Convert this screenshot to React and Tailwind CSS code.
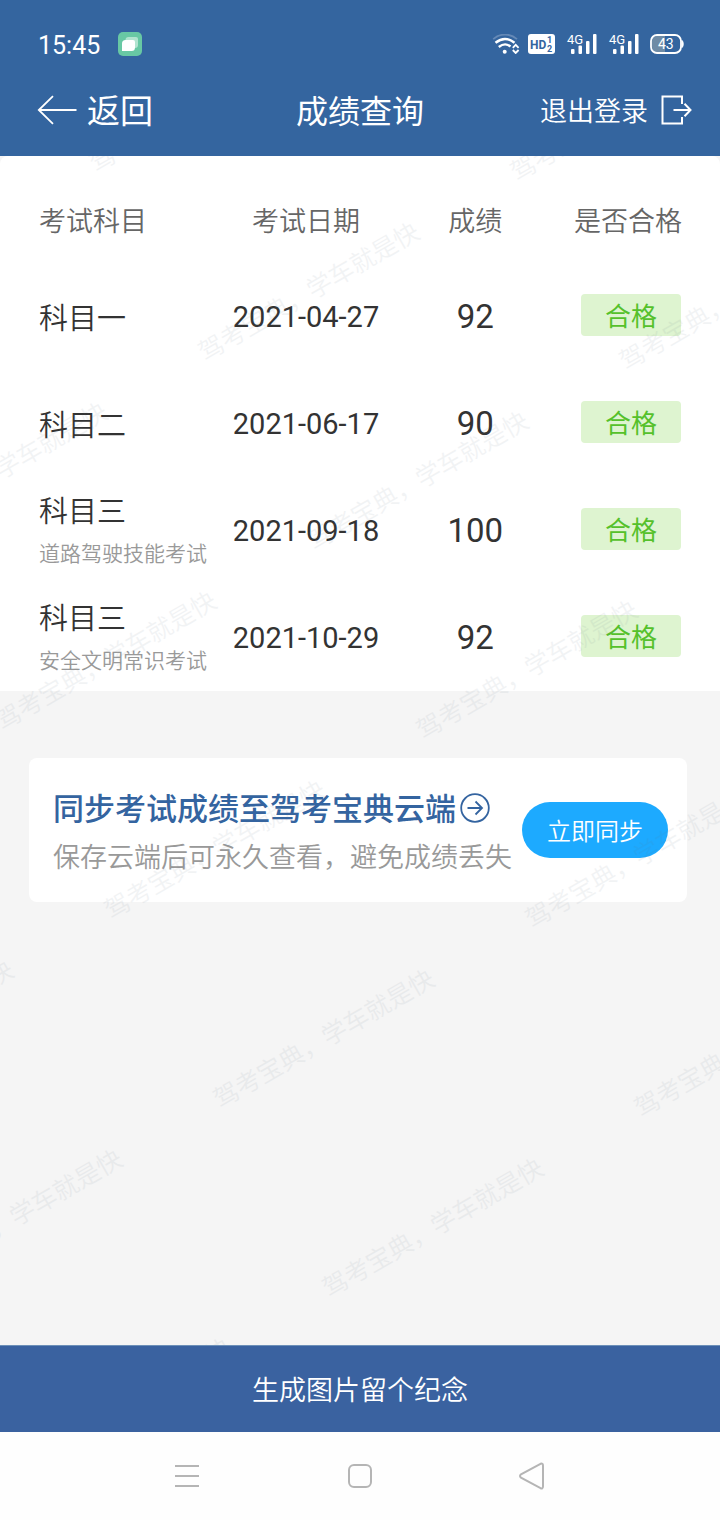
const CJK = "font-[Roboto,'Noto_Sans_CJK_SC',sans-serif]";

const records = [
  { id: 1, subject: '科目一', date: '2021-04-27', score: 92 },
  { id: 2, subject: '科目二', date: '2021-06-17', score: 90 },
  { id: 3, subject: '科目三', note: '道路驾驶技能考试', date: '2021-09-18', score: 100 },
  { id: 4, subject: '科目三', note: '安全文明常识考试', date: '2021-10-29', score: 92 },
];

// Staggered watermark grid: each row shifts right and down, columns repeat every 421px
const watermarks = [];
for (let row = 0; row < 8; row += 1) {
  for (let col = -3; col < 3; col += 1) {
    const x = 96 + row * 109 + col * 421;
    if (x > -215 && x < 715) {
      watermarks.push({ x, y: 17 + row * 189 + col * 9 });
    }
  }
}

function Watermark() {
  return (
    <div aria-hidden="true" className="pointer-events-none absolute inset-0 overflow-hidden">
      <svg className="h-full w-full fill-[#5f7285] text-[25px] font-[350] opacity-[0.08]">
        {watermarks.map(({ x, y }) => (
          <text key={`${x}-${y}`} transform={`translate(${x} ${y}) rotate(-30)`}>
            驾考宝典，学车就是快
          </text>
        ))}
      </svg>
    </div>
  );
}

function NoteIcon() {
  return (
    <svg className="h-6 w-6" viewBox="0 0 24 24">
      <rect width="24" height="24" rx="5" fill="#68c8a4" />
      <path d="M10.500 5H18a2 2 0 0 1 2 2v6a3 3 0 0 1-3 3H9.500a2 2 0 0 1-2-2V8a3 3 0 0 1 3-3Z" fill="#b2e4d0" />
      <path d="M7.500 8H15a2 2 0 0 1 2 2v5.500a3.500 3.500 0 0 1-3.500 3.500H4V11.500A3.500 3.500 0 0 1 7.500 8Z" fill="#fff" />
    </svg>
  );
}

function WifiIcon() {
  return (
    <svg className="h-5 w-7" viewBox="0 0 28 20" fill="none" stroke="#fff" strokeWidth="2.400">
      <path d="M1.200 5.200C8-1 18-1 25 5.200" stroke="#6589b6" strokeWidth="1.800" />
      <path d="M3.500 8.800C9.500 3.900 16.500 3.900 22.500 8.800" />
      <path d="M6.800 13C10.800 9.800 15.200 9.800 18.500 12.500" />
      <circle cx="12.700" cy="17.800" r="2" fill="#fff" stroke="none" />
      <path d="M20.800 13.800 23.700 10.800l2.900 3M20.800 16 23.700 19l2.900-3" strokeWidth="1.800" />
    </svg>
  );
}

function SignalIcon() {
  return (
    <svg className="h-5 w-[31px] overflow-visible" viewBox="0 0 31 20" fill="#fff">
      <text x="1" y="10" className="text-[13px]">
        4G
      </text>
      <rect x="5" y="15" width="3.500" height="5" rx="1" />
      <rect x="12.500" y="11.500" width="3.500" height="8.500" rx="1" />
      <rect x="20" y="7" width="3.500" height="13" rx="1" />
      <rect x="27" y="0" width="3.500" height="20" rx="1" />
    </svg>
  );
}

function HdIcon() {
  return (
    <svg className="h-5 w-[27px] overflow-visible" viewBox="0 0 27 20">
      <rect width="27" height="20" rx="3" fill="#fff" />
      <g fill="#34659f" className="font-bold">
        <text x="2" y="15" className="text-[12px]">
          HD
        </text>
        <text x="19" y="9" className="text-[9px]">
          1
        </text>
        <text x="19" y="18" className="text-[9px]">
          2
        </text>
      </g>
    </svg>
  );
}

function BatteryIcon() {
  return (
    <svg className="h-5 w-[34px]" viewBox="0 0 34 20">
      <path d="M7 2h8v16H7a5 5 0 0 1-5-5V7a5 5 0 0 1 5-5Z" fill="#6e8ba6" />
      <rect x="1" y="1" width="30" height="18" rx="6" fill="none" stroke="#fff" strokeWidth="1.800" />
      <path d="M32 6.500c1.600.8 1.600 6.200 0 7Z" fill="#fff" stroke="#fff" />
      <text x="8" y="15" fill="#fff" className="text-[14px]">
        43
      </text>
    </svg>
  );
}

function StatusBar() {
  return (
    <div className="flex h-16 items-center justify-between pt-6 pr-9 pl-[38px]">
      <div className="flex items-center gap-[18px]">
        <span className="pt-1 text-[25px] leading-8">15:45</span>
        <NoteIcon />
      </div>
      <div className="flex items-center">
        <WifiIcon />
        <span className="ml-2 flex items-center gap-[11px]">
          <HdIcon />
          <SignalIcon />
          <SignalIcon />
          <BatteryIcon />
        </span>
      </div>
    </div>
  );
}

function NavBar() {
  return (
    <div className="grid h-[92px] grid-cols-[1fr_auto_1fr] items-center px-7">
      <button type="button" className="flex items-center gap-[10px] justify-self-start pl-[9px] text-[33px] leading-10">
        <svg className="h-[30px] w-10" viewBox="0 0 40 30" fill="none" stroke="currentColor" strokeWidth="1.800">
          <path d="M39.500 15H2M16 1.200 1.800 15 16 28.800" />
        </svg>
        <span className="pt-1">返回</span>
      </button>
      <h1 className="pt-1 text-[32px] leading-10">成绩查询</h1>
      <button type="button" className="flex items-center gap-[13px] justify-self-end text-[27px] leading-10">
        <span className="pt-1 font-[350]">退出登录</span>
        <svg className="h-[30px] w-[31px]" viewBox="0 0 31 30" fill="none" stroke="currentColor" strokeWidth="2">
          <path d="M21 9V1.500H1.500v27H21V22" />
          <path d="M12.500 15H29M23.500 8.800 29.500 15l-6 6.200" />
        </svg>
      </button>
    </div>
  );
}

function ScoreTable() {
  return (
    <div className="rounded-t-lg bg-white">
      <table className="w-full table-fixed text-center text-[#333]">
        <thead className="text-[27px] leading-10 text-[#666]">
          <tr className="h-[107px]">
            <th className="w-[30%] pt-6 pl-[39px] text-left font-[350] whitespace-nowrap">考试科目</th>
            <th className="w-[25%] pt-6 font-[350]">考试日期</th>
            <th className="w-[22%] pt-6 font-[350]">成绩</th>
            <th className="w-[23%] pt-6 pr-[38px] text-right font-[350] whitespace-nowrap">是否合格</th>
          </tr>
        </thead>
        <tbody>
          {records.map((item) => (
            <tr key={item.id} className="h-[107px]">
              <td className="pt-1 pl-[39px] text-left font-[350] whitespace-nowrap">
                <p className="text-[29px] leading-[42px]">{item.subject}</p>
                {item.note && <p className="text-[21px] leading-[42px] text-[#999]">{item.note}</p>}
              </td>
              <td className="pt-[2px] text-[29px] whitespace-nowrap">{item.date}</td>
              <td className="text-[33px]">{item.score}</td>
              <td className="pr-[39px] pb-1">
                <span className="ml-auto block w-[100px] rounded bg-[#def4d0] pt-1 text-[26px] leading-[38px] text-[#55c12b]">
                  合格
                </span>
              </td>
            </tr>
          ))}
        </tbody>
      </table>
    </div>
  );
}

function SyncCard() {
  return (
    <section className="mt-[67px] mr-[33px] ml-[29px] flex h-36 items-center justify-between rounded-lg bg-white pr-[19px] pl-6">
      <div className="pt-2 whitespace-nowrap">
        <a href="#sync" className="flex items-center gap-1 text-[31px] leading-[48px] font-medium text-[#3464a0]">
          同步考试成绩至驾考宝典云端
          <svg className="mb-1 h-[30px] w-[30px]" viewBox="0 0 30 30" fill="none" stroke="currentColor" strokeWidth="1.800">
            <circle cx="15" cy="15" r="13.800" />
            <path d="M7.500 15h14M15.500 8.500 22 15l-6.500 6.500" />
          </svg>
        </a>
        <p className="text-[27px] leading-[48px] font-[350] text-[#999]">保存云端后可永久查看，避免成绩丢失</p>
      </div>
      <button
        type="button"
        className="h-14 w-[146px] shrink-0 rounded-full bg-[#1daaff] pt-1 text-2xl font-[350] text-white"
      >
        立即同步
      </button>
    </section>
  );
}

function SystemNav() {
  return (
    <nav className="grid h-[88px] grid-cols-3 place-items-center bg-[#fefefe] px-[14%] text-[#b5b5b5]">
      <button type="button" aria-label="菜单">
        <svg className="h-7 w-7" viewBox="0 0 28 28" fill="none" stroke="currentColor" strokeWidth="2">
          <path d="M2 4h24M2 14h24M2 24h24" />
        </svg>
      </button>
      <button type="button" aria-label="主页">
        <svg className="h-7 w-7" viewBox="0 0 28 28" fill="none" stroke="currentColor" strokeWidth="2">
          <rect x="3" y="3" width="22" height="22" rx="5" />
        </svg>
      </button>
      <button type="button" aria-label="后退">
        <svg className="h-7 w-7" viewBox="0 0 28 28" fill="none" stroke="currentColor" strokeWidth="2">
          <path d="M21.500 1.800 2 12.300q-2 1.700 0 3.400L21.500 26.200q2.500.8 2.500-2V3.800q0-2.800-2.500-2Z" />
        </svg>
      </button>
    </nav>
  );
}

function App() {
  return (
    <div className={`flex min-h-screen flex-col bg-[#f5f5f5] ${CJK}`}>
      <header className="bg-[#34659f] text-white">
        <StatusBar />
        <NavBar />
      </header>
      <main className="relative flex-1">
        <ScoreTable />
        <SyncCard />
        <Watermark />
      </main>
      <button
        type="button"
        className="h-[87px] border-t border-[#6d90b8] bg-[#3a62a0] pt-1 text-[27px] font-[350] text-white"
      >
        生成图片留个纪念
      </button>
      <SystemNav />
    </div>
  );
}

export default App;
